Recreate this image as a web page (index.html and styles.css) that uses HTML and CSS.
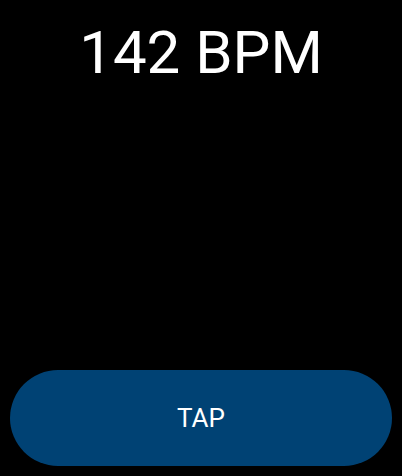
FILE: index.html
```html
<!DOCTYPE html>
<html lang="en">
<head>
  <meta charset="UTF-8">
  <meta name="viewport" content="width=device-width, initial-scale=1.0">
  <title>BPM</title>
  <link rel="stylesheet" href="styles.css">
</head>
<body>
  <div class="screen">
    <h1 class="bpm">142 BPM</h1>
    <button class="tap-btn">TAP</button>
  </div>
</body>
</html>
```

FILE: styles.css
```css
body {
  font-family: Roboto, "Noto Sans", sans-serif;
  margin: 0;
  padding: 0;
  background-color: #000;
}

.screen {
  width: 402px;
  height: 476px;
  display: flex;
  flex-direction: column;
  justify-content: space-between;
  padding: 0 10px 10px;
  box-sizing: border-box;
}

.bpm {
  margin: 0;
  padding-top: 20px;
  text-align: center;
  color: #fff;
  font-size: 60px;
  font-weight: 400;
  line-height: 66px;
}

.tap-btn {
  border: none;
  height: 96px;
  border-radius: 48px;
  background-color: #004274;
  color: #fff;
  font-family: Roboto, "Noto Sans", sans-serif;
  font-size: 26px;
  cursor: pointer;
}
```
